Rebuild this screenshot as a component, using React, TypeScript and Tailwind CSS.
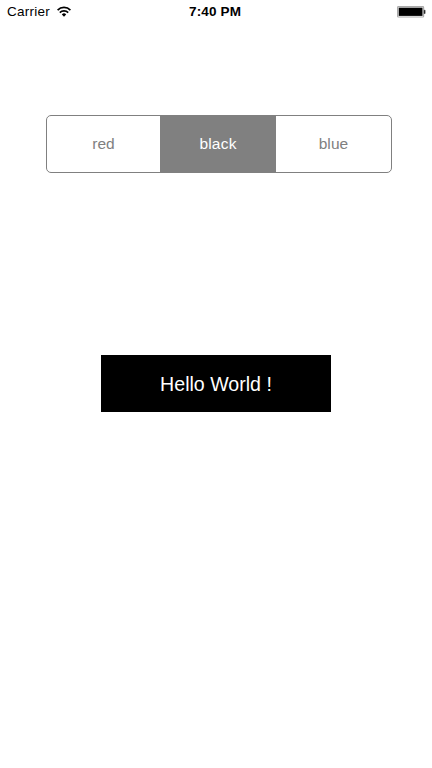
import React from "react";

const segments = ["red", "black", "blue"];

export default function App() {
  return (
    <main className="h-[768px] w-[432px] overflow-hidden bg-white font-['Liberation_Sans',Arial,sans-serif] text-black">
      <header className="grid h-6 grid-cols-[144px_142px_1fr] items-center pl-[7px] pr-[6px]">
        <div className="flex items-center gap-[7px] text-[13.5px] leading-6">
          <span className="w-[43px] whitespace-nowrap tracking-[0.25px]">Carrier</span>
          <svg className="-mt-px" width="14" height="11" viewBox="0 0 14 11" fill="none" stroke="black" strokeWidth="1.7">
            <path d="M.6 4.1a9 9 0 0 1 12.8 0M2.8 6.6a6 6 0 0 1 8.4 0" />
            <path d="M4.8 8.4a3.1 3.1 0 0 1 4.4 0L7 10.8z" fill="black" stroke="none" />
          </svg>
        </div>
        <span className="pl-[38px] text-[13.5px] font-bold leading-6 tracking-[0.15px]">7:40 PM</span>
        <svg className="justify-self-end" width="29" height="12" viewBox="0 0 29 12">
          <rect x=".6" y=".6" width="26" height="10.4" rx=".8" fill="white" stroke="#aaa" strokeWidth="1.2" />
          <rect x="1.7" y="1.7" width="23.8" height="8.2" />
          <path d="M27.2 4.2h.9v3.3h-.9z" stroke="#222" strokeWidth=".5" />
        </svg>
      </header>
      <div className="ml-[46px] mt-[91px] grid h-[58px] w-[346px] grid-cols-[113px_116px_115px] overflow-hidden rounded-[5px] border border-[#808080]">
        {segments.map((label) => (
          <button key={label} className={label === "black" ? "bg-[#808080] text-[15.5px] tracking-[0.2px] text-white" : "text-[15.5px] tracking-[0.1px] text-[#808080]"}>
            {label}
          </button>
        ))}
      </div>
      <div className="ml-[101px] mt-[182px] flex h-[57px] w-[230px] items-center justify-center bg-black pt-[3px] text-[19.6px] text-white">
        Hello World !
      </div>
    </main>
  );
}
